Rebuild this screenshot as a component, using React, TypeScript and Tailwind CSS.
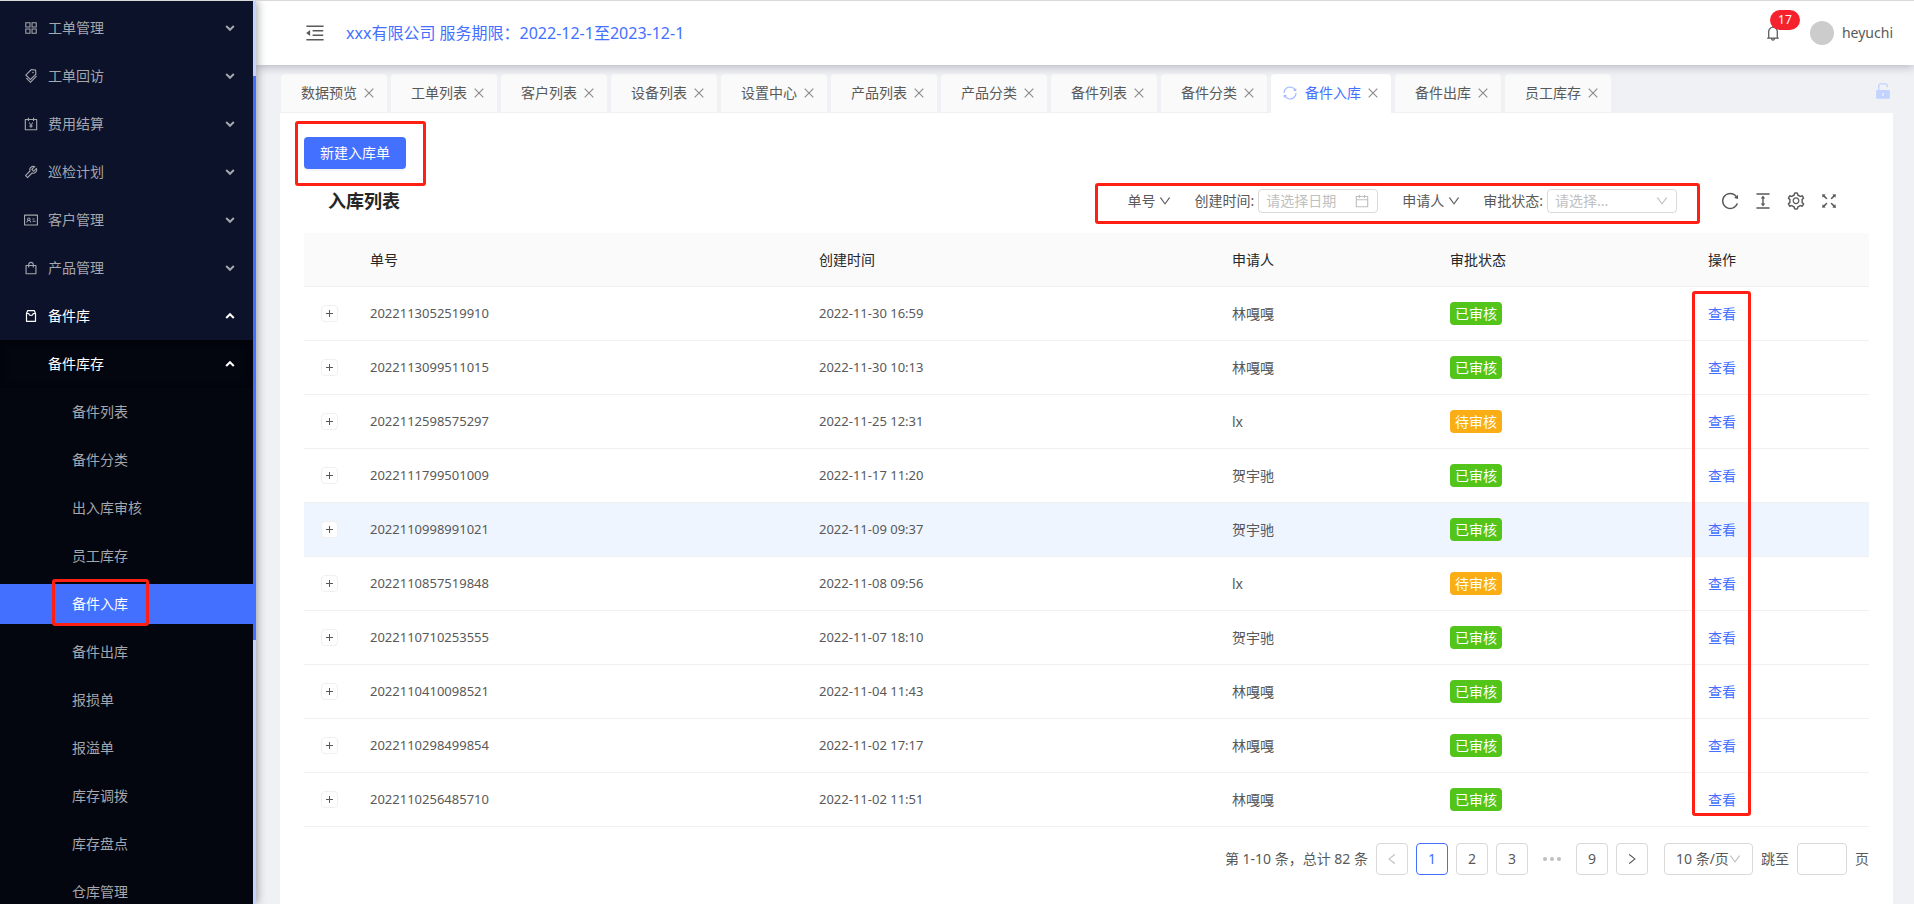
import React from 'react';
import {
  AiFillUnlock,
  AiOutlineAccountBook,
  AiOutlineAppstore,
  AiOutlineBell,
  AiOutlineCalendar,
  AiOutlineClose,
  AiOutlineColumnHeight,
  AiOutlineDown,
  AiOutlineFullscreen,
  AiOutlineIdcard,
  AiOutlineLeft,
  AiOutlineMenuFold,
  AiOutlineReload,
  AiOutlineRight,
  AiOutlineSetting,
  AiOutlineShopping,
  AiOutlineSync,
  AiOutlineTags,
  AiOutlineTool,
} from 'react-icons/ai';
import { clsx } from 'clsx';

const BoxIcon = () => (
  <svg viewBox="0 0 16 16" className="h-4 w-4" fill="none" stroke="currentColor" strokeWidth="1.2" strokeLinejoin="round">
    <path d="M3.500 5.500 4.600 2.700h6.800l1.100 2.800v7.800h-9z" />
    <path d="M3.500 5.500h2.200c.3 1.400 1.200 2 2.300 2s2-.6 2.300-2h2.200" />
  </svg>
);

const MENU = [
  { label: '工单管理', icon: <AiOutlineAppstore /> },
  { label: '工单回访', icon: <AiOutlineTags /> },
  { label: '费用结算', icon: <AiOutlineAccountBook /> },
  { label: '巡检计划', icon: <AiOutlineTool /> },
  { label: '客户管理', icon: <AiOutlineIdcard /> },
  { label: '产品管理', icon: <AiOutlineShopping /> },
];

const SUB_MENU = [
  '备件列表',
  '备件分类',
  '出入库审核',
  '员工库存',
  '备件入库',
  '备件出库',
  '报损单',
  '报溢单',
  '库存调拨',
  '库存盘点',
  '仓库管理',
];

const TABS = [
  '数据预览',
  '工单列表',
  '客户列表',
  '设备列表',
  '设置中心',
  '产品列表',
  '产品分类',
  '备件列表',
  '备件分类',
  '备件入库',
  '备件出库',
  '员工库存',
];

const ACTIVE = '备件入库';

type Status = '已审核' | '待审核';

interface StockRow {
  no: string;
  time: string;
  applicant: string;
  status: Status;
}

const ROWS: StockRow[] = [
  { no: '2022113052519910', time: '2022-11-30 16:59', applicant: '林嘎嘎', status: '已审核' },
  { no: '2022113099511015', time: '2022-11-30 10:13', applicant: '林嘎嘎', status: '已审核' },
  { no: '2022112598575297', time: '2022-11-25 12:31', applicant: 'lx', status: '待审核' },
  { no: '2022111799501009', time: '2022-11-17 11:20', applicant: '贺宇驰', status: '已审核' },
  { no: '2022110998991021', time: '2022-11-09 09:37', applicant: '贺宇驰', status: '已审核' },
  { no: '2022110857519848', time: '2022-11-08 09:56', applicant: 'lx', status: '待审核' },
  { no: '2022110710253555', time: '2022-11-07 18:10', applicant: '贺宇驰', status: '已审核' },
  { no: '2022110410098521', time: '2022-11-04 11:43', applicant: '林嘎嘎', status: '已审核' },
  { no: '2022110298499854', time: '2022-11-02 17:17', applicant: '林嘎嘎', status: '已审核' },
  { no: '2022110256485710', time: '2022-11-02 11:51', applicant: '林嘎嘎', status: '已审核' },
];

const HIGHLIGHTED_ROW = 4;

// Red frame that calls attention to a region
const Marker = ({ className }: { className: string }) => (
  <div className={clsx('pointer-events-none absolute z-10 rounded-[3px] border-3 border-[#ff1f13]', className)} />
);

const Arrow = ({ up = false }: { up?: boolean }) => (
  <svg viewBox="0 0 10 10" className="h-2.5 w-2.5" fill="none" stroke="currentColor" strokeWidth="2">
    <path d={up ? 'M1.200 7 5 3.200 8.800 7' : 'M1.200 3 5 6.800 8.800 3'} />
  </svg>
);

const Sidebar = () => (
  <aside className="relative z-20 w-64 shrink-0 overflow-hidden bg-[#c7d3ff] text-[#a5a7ae] shadow-[2px_0_8px_rgba(29,35,41,0.35)]">
    {/* Scrollbar thumb */}
    <div className="absolute top-[75px] right-0 h-[564px] w-[3px] bg-[#4470ff]" />
    <nav className="relative">
      <div className="mr-[3px] bg-[#0c1229] pt-[3px]">
        {MENU.map((item) => (
          <button key={item.label} className="flex h-12 w-full items-center pr-[18px] pl-[23px] text-left">
            <span className="w-[25px] text-base">{item.icon}</span>
            <span className="flex-1">{item.label}</span>
            <Arrow />
          </button>
        ))}
        <button className="flex h-12 w-full items-center pr-[18px] pl-[23px] text-left text-white">
          <span className="w-[25px]">
            <BoxIcon />
          </span>
          <span className="flex-1">备件库</span>
          <Arrow up />
        </button>
      </div>
      <div className="mr-[3px] bg-[#03050f] shadow-[inset_0_2px_8px_rgba(0,0,0,0.45)]">
        <button className="flex h-12 w-full items-center pr-[18px] pl-12 text-left text-white">
          <span className="flex-1">备件库存</span>
          <Arrow up />
        </button>
      </div>
      <ul>
        {SUB_MENU.map((label) => (
          <li key={label} className="relative">
            <div className="mr-[3px] h-1 bg-[#03050f]" />
            <a
              href="#"
              className={clsx(
                'flex h-10 items-center pl-[72px]',
                label === ACTIVE ? 'bg-[#4470ff] text-white' : 'mr-[3px] bg-[#03050f]'
              )}
            >
              {label}
            </a>
            <div className="mr-[3px] h-1 bg-[#03050f]" />
            {label === ACTIVE && <Marker className="top-[-1px] left-[52px] h-[47px] w-[97px]" />}
          </li>
        ))}
      </ul>
    </nav>
  </aside>
);

const Header = () => (
  <header className="relative z-10 flex h-16 items-center bg-white pr-[21px] pl-12 shadow-[0_1px_10px_rgba(0,21,41,0.3)]">
    <button aria-label="收起菜单" className="text-[22px] text-[#595959]">
      <AiOutlineMenuFold />
    </button>
    <a href="#" className="ml-5 text-base text-[#4470ff]">
      xxx有限公司 服务期限：2022-12-1至2023-12-1
    </a>
    <div className="ml-auto flex items-center">
      <button aria-label="通知" className="relative mr-7 text-[18px]">
        <AiOutlineBell />
        <span className="absolute -top-3.5 left-1.5 flex h-5 w-[30px] items-center justify-center rounded-full bg-[#f5222d] text-xs text-white">
          17
        </span>
      </button>
      <span className="mr-2 h-6 w-6 rounded-full bg-[#cccccc]" />
      <span>heyuchi</span>
    </div>
  </header>
);

const TabBar = () => (
  <div className="flex h-12 items-end gap-1 pt-[9px] pl-px">
    {TABS.map((tab) => {
      const active = tab === ACTIVE;
      return (
        <div
          key={tab}
          className={clsx(
            'flex h-[39px] shrink-0 items-center rounded-t border-b pr-[11px]',
            active ? 'border-white bg-white pl-[11px] text-[#4470ff]' : 'border-[#f0f0f0] bg-[#fafafa] pl-5'
          )}
        >
          {active && <AiOutlineSync className="mr-[7px] text-base text-[#a3b9ff]" />}
          <a href="#">{tab}</a>
          <button aria-label={`关闭${tab}`} className="ml-[5px] text-sm text-[#8c8c8c]">
            <AiOutlineClose />
          </button>
        </div>
      );
    })}
    <button aria-label="解锁标签" className="mb-3 ml-auto text-[20px] text-[#c3d3ff]">
      <AiFillUnlock />
    </button>
  </div>
);

const Filters = () => (
  <div className="relative flex items-center">
    <button className="flex items-center gap-[3px]">
      单号 <AiOutlineDown />
    </button>
    <div className="ml-[22px] flex items-center gap-1">
      <label htmlFor="created">创建时间:</label>
      <div className="flex h-6 w-[120px] items-center rounded border border-[#d9d9d9] px-[7px]">
        <input id="created" placeholder="请选择日期" className="w-full min-w-0 outline-none placeholder:text-[#bfbfbf]" />
        <AiOutlineCalendar className="shrink-0 text-base text-[#bfbfbf]" />
      </div>
    </div>
    <button className="ml-6 flex items-center gap-[3px]">
      申请人 <AiOutlineDown />
    </button>
    <div className="ml-[22px] flex items-center gap-1">
      <label htmlFor="status">审批状态:</label>
      <div className="relative">
        <select id="status" className="h-6 w-[130px] appearance-none rounded border border-[#d9d9d9] pl-[7px] text-[#bfbfbf]">
          <option>请选择...</option>
        </select>
        <AiOutlineDown className="pointer-events-none absolute top-[5px] right-2 text-[#bfbfbf]" />
      </div>
    </div>
    <Marker className="-top-1.5 -right-[23px] -bottom-[11px] -left-8" />
  </div>
);

const CELL = 'border-b border-[#f0f0f0] px-4 font-normal';

const StockTable = () => (
  <div className="relative">
    <table className="w-full table-fixed border-separate border-spacing-0 text-left">
      <colgroup>
        <col className="w-[50px]" />
        <col className="w-[449px]" />
        <col className="w-[413px]" />
        <col className="w-[218px]" />
        <col className="w-[258px]" />
        <col className="w-[177px]" />
      </colgroup>
      <thead>
        <tr className="h-[54px] bg-[#fafafa] text-[#262626]">
          <th className={CELL} />
          <th className={CELL}>单号</th>
          <th className={CELL}>创建时间</th>
          <th className={CELL}>申请人</th>
          <th className={CELL}>审批状态</th>
          <th className={CELL}>操作</th>
        </tr>
      </thead>
      <tbody>
        {ROWS.map((row, i) => (
          <tr key={row.no} className={clsx('h-[54px]', i === HIGHLIGHTED_ROW && 'bg-[#eef5ff]')}>
            <td className="border-b border-[#f0f0f0] pl-[17px]">
              <button
                aria-label="展开行"
                className="flex h-[17px] w-[17px] items-center justify-center rounded-sm border border-[#f0f0f0] bg-white"
              >
                <svg viewBox="0 0 7 7" className="h-[7px] w-[7px]" stroke="currentColor">
                  <path d="M0 3.5h7M3.5 0v7" />
                </svg>
              </button>
            </td>
            <td className={clsx(CELL, 'text-[13px]')}>{row.no}</td>
            <td className={clsx(CELL, 'text-[13px]')}>{row.time}</td>
            <td className={CELL}>{row.applicant}</td>
            <td className={CELL}>
              <span
                className={clsx(
                  'flex h-[23px] w-fit items-center rounded px-[5px] text-white',
                  row.status === '已审核' ? 'bg-[#52c41a]' : 'bg-[#faad14]'
                )}
              >
                {row.status}
              </span>
            </td>
            <td className={CELL}>
              <a href="#" className="text-[#4470ff]">
                查看
              </a>
            </td>
          </tr>
        ))}
      </tbody>
    </table>
    <Marker className="top-[58px] right-[118px] bottom-[11px] w-[59px]" />
  </div>
);

const PAGE_BUTTON = 'flex h-8 w-8 items-center justify-center rounded border';

const Pagination = () => (
  <div className="mt-4 flex items-center justify-end gap-2">
    <span>第 1-10 条，总计 82 条</span>
    <button disabled aria-label="上一页" className={clsx(PAGE_BUTTON, 'border-[#d9d9d9] text-[#bfbfbf]')}>
      <AiOutlineLeft />
    </button>
    <button className={clsx(PAGE_BUTTON, 'border-[#4470ff] text-[#4470ff]')}>1</button>
    <button className={clsx(PAGE_BUTTON, 'border-[#d9d9d9]')}>2</button>
    <button className={clsx(PAGE_BUTTON, 'border-[#d9d9d9]')}>3</button>
    <span className="flex h-8 w-8 items-center justify-center gap-[3px]">
      <i className="h-1 w-1 rounded-full bg-[#bfbfbf]" />
      <i className="h-1 w-1 rounded-full bg-[#bfbfbf]" />
      <i className="h-1 w-1 rounded-full bg-[#bfbfbf]" />
    </span>
    <button className={clsx(PAGE_BUTTON, 'border-[#d9d9d9]')}>9</button>
    <button aria-label="下一页" className={clsx(PAGE_BUTTON, 'border-[#d9d9d9]')}>
      <AiOutlineRight />
    </button>
    <div className="relative ml-2">
      <select aria-label="每页条数" className="h-8 w-[89px] appearance-none rounded border border-[#d9d9d9] pl-[11px]">
        <option>10 条/页</option>
      </select>
      <AiOutlineDown className="pointer-events-none absolute top-[9px] right-[11px] text-[#bfbfbf]" />
    </div>
    <label htmlFor="jump">跳至</label>
    <input id="jump" className="h-8 w-[50px] rounded border border-[#d9d9d9] px-2" />
    <span>页</span>
  </div>
);

export default function App() {
  return (
    <div className="flex h-screen overflow-hidden border-t border-[#d9d9d9] bg-[#f0f1f5] font-['Noto_Sans','Noto_Sans_CJK_SC',sans-serif] text-sm text-[#595959]">
      <Sidebar />
      <div className="flex min-w-0 flex-1 flex-col">
        <Header />
        <div className="flex flex-1 flex-col pr-[21px] pl-6">
          <TabBar />
          <main className="flex-1 bg-white px-6 pt-6">
            <div className="relative w-fit">
              <button className="h-8 rounded bg-[#4470ff] px-4 text-white shadow-[0_2px_0_rgba(0,0,0,0.045)]">新建入库单</button>
              <Marker className="-top-4 -right-5 -bottom-[17px] -left-[9px]" />
            </div>
            <div className="flex h-16 items-center pl-6">
              <h1 className="text-lg font-bold text-[#262626]">入库列表</h1>
              <div className="ml-auto flex items-center pr-[30px]">
                <Filters />
                <div className="ml-[43px] flex items-center gap-[13px] text-[20px]">
                  <button aria-label="刷新">
                    <AiOutlineReload />
                  </button>
                  <button aria-label="密度">
                    <AiOutlineColumnHeight />
                  </button>
                  <button aria-label="列设置">
                    <AiOutlineSetting />
                  </button>
                  <button aria-label="全屏">
                    <AiOutlineFullscreen />
                  </button>
                </div>
              </div>
            </div>
            <StockTable />
            <Pagination />
          </main>
        </div>
      </div>
    </div>
  );
}
